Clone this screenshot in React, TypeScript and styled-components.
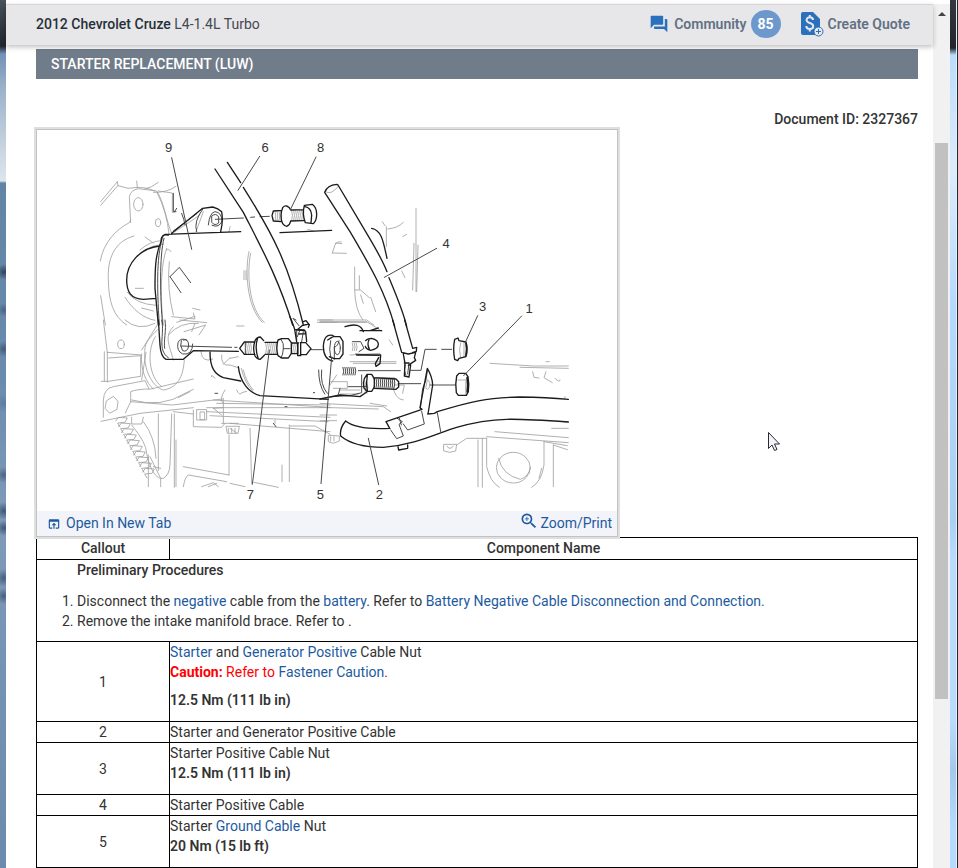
import React from "react";
import styled, { createGlobalStyle, css } from "styled-components";
import { MdForum, MdOpenInBrowser, MdZoomIn } from "react-icons/md";

const GlobalStyle = createGlobalStyle`
  * { box-sizing: border-box; }
  body {
    margin: 0;
    background: #fff;
    color: #333;
    font-family: Roboto, "Liberation Sans", sans-serif;
    font-size: 14px;
    line-height: 20px;
  }
`;

const Window = styled.div`
  display: grid;
  grid-template-columns: 6px minmax(0, 1fr) 17px 8px;
  min-height: 100vh;
`;

const LeftFrame = styled.div`
  background:
    radial-gradient(circle at 4px 272px, #2f4358 0, transparent 8px),
    radial-gradient(circle at 4px 310px, #4b657f 0, transparent 7px),
    radial-gradient(circle at 4px 349px, #435c76 0, transparent 8px),
    radial-gradient(circle at 4px 403px, #5c7ca3 0, transparent 9px),
    radial-gradient(circle at 4px 475px, #4b657f 0, transparent 8px),
    radial-gradient(circle at 4px 511px, #3d5873 0, transparent 9px),
    radial-gradient(circle at 4px 528px, #3d5873 0, transparent 8px),
    radial-gradient(circle at 4px 578px, #45607c 0, transparent 9px),
    radial-gradient(circle at 4px 596px, #45607c 0, transparent 8px),
    linear-gradient(#4a525b 0, #1f262c 46px, #7292b8 54px, #9db3cb 90px,
      #c9d5e1 150px, #dde5ec 181px, #6484a6 183px, #6b8bae 380px, #7f9bba 520px, #7391b2 700px, #6c8aad 100%);
`;

const RightFrame = styled.div`
  border-right: 1px solid #22272c;
  box-shadow: inset -1px 0 #e4f1fc;
  background: linear-gradient(#33383d 0, #20262b 48px, #b9dcfb 55px, #cfe5fb 120px,
    #dcecfb 170px, #b6dafd 300px, #a9cff3 520px, #b9dcfe 560px, #b9dcfe 720px, #a4c8eb 770px, #b6dafd 830px, #b6dafd 100%);
`;

const Viewport = styled.div`
  padding-top: 4px;
  background: #fff;
`;

const Header = styled.header`
  position: relative;
  display: flex;
  align-items: center;
  justify-content: space-between;
  height: 41px;
  padding: 0 23px 2px 30px;
  border-top: 1px solid #d5d5da;
  background: #e7e7e9;
  box-shadow: 0 2px 5px rgba(0, 0, 0, 0.25);
`;

const Vehicle = styled.h1`
  margin: 0;
  color: #46484f;
  font-size: 14px;
  font-weight: 400;

  strong {
    color: #263038;
    font-weight: 500;
  }
`;

const Actions = styled.nav`
  display: flex;
  align-items: center;
  gap: 20px;
`;

const ActionLink = styled.a<{ $gap: number }>`
  display: flex;
  align-items: center;
  gap: ${({ $gap }) => $gap}px;
  color: #627184;
  font-weight: 600;
  text-decoration: none;

  svg { color: #2a70bd; }
`;

const Badge = styled.span`
  width: 30px;
  margin-left: -1px;
  border-radius: 50%;
  background: #6c98cd;
  color: #fff;
  font-weight: 700;
  line-height: 28px;
  text-align: center;
`;

const Article = styled.main`
  padding: 4px 15px 0 30px;
`;

const SectionTitle = styled.h2`
  margin: 0;
  padding: 0 15px;
  background: #717c8a;
  color: #fff;
  font-size: 14px;
  font-weight: 500;
  line-height: 30px;
`;

const DocumentId = styled.p`
  margin: 30px 0 0;
  font-weight: 500;
  text-align: right;
`;

const Figure = styled.figure`
  position: relative;
  width: 582px;
  max-width: 100%;
  margin: 0;
  border: 1px solid #c2c2c2;
  background: #fff;
  box-shadow: 0 0 0 2px #dfdfdf;
`;

const Diagram = styled.svg`
  display: block;
  width: 100%;
  height: auto;
  fill: none;
  stroke-linecap: round;
  stroke-linejoin: round;

  text {
    fill: #333;
    font: 39px "Liberation Sans", sans-serif;
    text-anchor: middle;
  }
`;

const tones = {
  heavy: css`stroke: #1c1c1c; stroke-width: 4;`,
  medium: css`stroke: #4a4a4a; stroke-width: 3;`,
  light: css`stroke: #a0a0a0; stroke-width: 2.5;`,
};

const Ink = styled.g<{ $tone: keyof typeof tones }>`
  ${({ $tone }) => tones[$tone]}
`;

const FigureLinks = styled.figcaption`
  display: flex;
  justify-content: space-between;
  height: 25px;
  padding: 0 5px 0 10px;
  background: #f2f4f9;
`;

const FigureLink = styled.a<{ $gap: number }>`
  display: flex;
  align-items: center;
  gap: ${({ $gap }) => $gap}px;
  color: #1e5aa0;
  line-height: 25px;
  text-decoration: none;
`;

const ZoomGlyph = styled(MdZoomIn)`
  align-self: flex-start;
`;

const Table = styled.table`
  width: 100%;
  border-collapse: collapse;

  th, td {
    padding: 0;
    border: 1px solid #000;
  }
  th {
    padding-bottom: 1px;
    font-weight: 500;
  }
  td a {
    color: #1e5aa0;
    text-decoration: none;
  }
`;

const CalloutHead = styled.th`
  width: 133px;
`;

const CalloutCell = styled.td`
  text-align: center;
`;

const Preliminary = styled.h3`
  margin: 0 0 0 40px;
  font-size: 14px;
  font-weight: 500;
`;

const Steps = styled.ol`
  margin: 11px 0 10px;
  padding-left: 40px;
`;

const Caution = styled.div`
  margin-bottom: 8px;
  color: #f00;
  strong { font-weight: 700; }
`;

const Torque = styled.p`
  margin: 0 0 11px;
  font-weight: 600;
`;

const ScrollTrack = styled.div`
  display: grid;
  grid-template-rows: 139fr 556fr 169fr;
  padding: 0 2px;
  border-top: 4px solid #fff;
  background: #f1f1f1;
`;

const ScrollArrow = styled.span`
  justify-self: center;
  width: 0;
  height: 0;
  margin-top: 8px;
  border: 4px solid transparent;
  border-top: 0;
  border-bottom-color: #444;
`;

const ScrollThumb = styled.div`
  background: #c1c1c1;
`;

const Pointer = styled.svg`
  position: absolute;
  top: 431px;
  left: 767px;
  width: 14px;
  height: 21px;
`;

function QuoteIcon() {
  return (
    <svg width="23" height="25" viewBox="0 0 23 25" aria-hidden="true">
      <path fill="currentColor" d="M2 0h10l7 7v14a2 2 0 0 1-2 2H2a2 2 0 0 1-2-2V2a2 2 0 0 1 2-2z" />
      <path fill="none" stroke="#e7e7e9" strokeWidth="2" d="M12 8c0-1.700-1.300-2.700-3.200-2.700S5.600 6.200 5.600 8c0 4 6.600 2 6.600 6.200 0 1.800-1.500 2.800-3.400 2.800s-3.500-1-3.500-2.900M8.800 3v2.500M8.800 17v2.500" />
      <circle cx="17.500" cy="19.500" r="4.500" fill="#e7e7e9" stroke="currentColor" />
      <path stroke="currentColor" d="M15 19.500h5M17.500 17v5" />
    </svg>
  );
}

const teeth = Array.from({ length: 10 }, (_, i) =>
  `M${257 + i * 9} ${303 + i * 17}l8-11 27 2-7 13-22 2 7 12`
).join("");

const threads = (x: number, y: number, h: number, n: number) =>
  Array.from({ length: n }, (_, i) => `M${x + i * 6} ${y}q5 ${h / 2} 0 ${h}`).join("");

function StarterDiagram() {
  return (
    <Diagram viewBox="21 15 1740 1143" role="img" aria-label="Starter components with numbered callouts">
      <g>
        <Ink $tone="light">
          <path d="M212 230L262 170M212 241L264 181M262 170l2 12 30 8q50-8 80 8M320 168l2 20M345 192q20-4 40-20M370 202q40 2 68-18" />
          <path d="M302 293L298 215Q302 195 325 191L380 198C402 230 408 285 425 325M381 202q30 60 36 125M385 198l42 6v58M302 285l-4 8C255 315 220 355 211 408M312 333C250 350 232 405 235 465 236 530 250 575 290 600M212 512L226 600" />
          <ellipse cx="325" cy="238" rx="14" ry="20" />
          <ellipse cx="384" cy="293" rx="8" ry="12" />
          <path d="M330 375q30-27 65-28M340 377q28-18 60-19M345 336l25 18M285 517C310 555 340 580 375 586M292 502q25 35 85 39M316 490h24M335 549l35 9" />
          <path d="M410 370C392 420 390 510 400 600M423 380q-8-12-14-5M418 410q-8 80 12 160M425 575l70 7-5-18M440 592l55-18M488 550l22 5M657 380C645 430 648 545 697 592M662 385C650 440 655 550 703 592M642 437v27M648 437v27M862 585h45M862 592h60" />
          <path d="M432 322l78-52M520 260l-22 60M600 305l-3 15M833 313q12 3 20 6" />
          <path d={threads(735, 258, 30, 4) + threads(785, 255, 32, 6)} />
        </Ink>
        <Ink $tone="medium">
          <path d="M400 332C380 380 380 480 388 600M402 340C388 390 390 520 398 600M420 455L448 427 482 473M420 455l33 48M430 205v55h8M440 250l-8 12M455 265q8 20 10 35" />
          <path d="M500 320q-10-30 18-67M535 300q4-38 20-40q20 2 21 28-8 22-30 13M546 272q13-9 20 4v18q-12 10-20-1z" />
          <path d="M556 283L640 279M662 277l12-1M690 275l28-1M430 318l70-52" />
        </Ink>
        <Ink $tone="heavy">
          <path d="M555 132L640 262C695 370 745 460 788 600M592 112L632 173M640 187C730 330 775 415 820 600" />
          <path d="M405 328L632 320M750 323L905 316M425 325L518 250 548 246Q565 250 575 260 580 290 572 320" />
          <path d="M415 330q-22-5-22 20C375 390 375 440 375 490L385 600M388 363C330 370 290 415 290 465C290 500 302 521 340 523L378 520" />
          <path d="M755 256l-25 2-4 14 4 16 24 2M758 248q5-6 12-5 9 3 12 12M758 248q-10 24 0 48 6 8 12 8 10-4 12-16M782 255l38-1M782 288l38-1M823 241l24-3q13 10 13 30t-10 28l-24-3q-10-25-3-52zM825 245q18 3 20 25l-2 24" />
        </Ink>
      </g>

      <g transform="translate(870 0)">
        <Ink $tone="light">
          <path d="M288 250v250M278 495l4-140M294 360l-4 140M199 305v60M187 290l8 12M203 312q30-2 47-20M248 335l12-7M245 438l10 20M37 384l10-30 18 2M37 384l42 1M47 355q12-8 17-4" />
          <path d="M104 426v70q2 60 24 88M118 452v40l30 26M104 495h15M122 510l8 25M152 517l15 43M0 585h140l22 15M0 592h140M17 200q15 12 38-16" />
        </Ink>
        <Ink $tone="heavy">
          <path d="M14 202L90 320C155 430 195 500 224 604M54 180L140 325C170 375 185 400 201 440M207 458C235 525 250 560 260 604M14 202Q22 180 50 178L54 180M155 310C185 315 190 350 201 400" />
        </Ink>
      </g>

      <g transform="translate(0 585)">
        <Ink $tone="light">
          <path d="M220 0L232 98M285 0q40 35 90 10M223 95v88M232 98v88M232 97l102 8M236 114l96-7v62L235 184M214 184h20M348 97L335 180M335 102C330 150 350 190 370 207M382 30C340 70 345 80 344 110C346 170 380 208 402 210C450 200 460 160 463 120M376 50C350 90 355 170 395 200M385 10L335 90" />
          <path d="M220 292V240Q222 205 250 200L345 182l12 25M213 304L330 280 490 263M286 279l16-34 125 10 150-18M305 240q90 25 160-20l25-12M302 245v-30q20-8 60-8l85-20 43-10M480 215l-35 18" />
          <path d="M430 120C420 80 400 50 430 20M415 45q35-40 90-35M450 0l80 8M462 35l65-20-20 30M495 10l-10 25M513 95q3 35 35 22M620 18h22M600 115l25-5" />
          <path d={teeth} />
          <path d="M305 315Q350 370 350 400C360 450 380 480 400 475Q418 465 420 435L425 282M305 292v20h30l5-20M340 305Q375 350 378 415M385 282v170M433 282v220M438 360v140M355 405v95M360 410l32 65v25M370 440l22 5" />
          <path d="M430 275L490 282M540 287L895 305M530 263h370M530 275L900 292M550 240L900 262M560 250l340 5M490 270v50l85 2 10-12M500 270v30h30v-30zM510 277v22h14v-22zM585 210q-20 30-5 40M580 235v75M575 310h50M550 265l25 20M550 265l30-2M600 310L900 335M597 345v120M460 440L597 465M460 500q5-30 15-35L590 485M515 500l35-12 15 12M535 500l25-10M600 490l45 10M660 325l5 165M778 315v170M756 435v50M672 487l73 15M735 310v-10M780 318h75l45 25M588 320l4 20h32l4-20zM595 325v12M605 325v12M615 325v12M600 325l20 14" />
          <path d="M575 105q-3 35 25 30l25 8M545 170q-5-10 10 4M600 113l-20 20M620 210q10 20 15 8l15-4" />
          <ellipse cx="273" cy="73" rx="10" ry="13" />
          <path d="M230 242l20-13 14 15-3 24-22 12-13-14z" />
          <path d={threads(650, 70, 30, 3) + threads(707, 68, 34, 6) + threads(788, 70, 30, 3)} />
          <path d="M634 145q10 45 34 68M640 150q8 36 30 60" />
        </Ink>
        <Ink $tone="medium">
          <path d="M395 0C405 45 380 90 415 113M405 0C410 30 400 65 404 85M452 78L605 82M614 82h7M842 89h35M470 60q-20-8-26 8-5 25 14 34 30 4 30-30 M460 60q16-6 16 18-4 20-18 14-10-15-4-30" />
          <path d="M866 150q0 45 18 72M875 150q-5 45 17 70M555 220h8M850 218h4M765 260h6M730 310l8 10" />
          <path d="M798 0l-9-5 18 22M800 28v35M810 30l-8 20M820 35l-5 30" />
          <path d="M646 67v36M753 58q10 12 7 28-1 18-7 28M760 86h20M804 68v34" />
        </Ink>
        <Ink $tone="heavy">
          <path d="M385 0L390 75Q392 110 408 118H460L490 92 625 94M540 96C540 145 555 163 580 173L632 183M625 140C630 185 655 218 690 227L895 238" />
          <g transform="translate(615 -30)">
            <path d="M60 96H28L14 115 28 133H60M60 92Q66 81 76 81L86 92M60 92Q52 116 60 138 66 148 76 148L88 136M68 84Q58 114 70 147M90 97H127M90 133H127M129 90L140 86H160L169 98V130L160 144H140L129 137Q122 114 129 90zM169 99H190M169 131H188M196 98H212L228 116 214 134H196M188 99v38h9V98" />
          </g>
          <path d="M780-10q10 24 14 38l6 38M820 5l8-3 8 10-20 5-15 13 24 2 2 9-20 1M827 35l3 30M795 28l28 2M838 14l-3 8" />
        </Ink>
      </g>

      <g transform="translate(870 585)">
        <Ink $tone="light">
          <path d="M0 5h140l45 28M90 125h138M100 130h128M510 130l130 8h105M600 142l145 3M638 155l4 17 15 2M678 155l-6 18 25 15M678 125h10M705 175q15 15 15 5" />
          <path d="M0 250L190 260l22 15M0 262l175 5M0 285h50M0 302h50M150 250l50 8M525 335l220 18M500 350l245 18M695 325h50M730 305h15" />
          <path d="M474 360v140M487 355v147M500 355v85Q510 485 538 502M500 355H440L410 375M672 365v70Q665 485 635 502M700 375v125M665 445l-8 30M672 365l70 12M700 375l42 14" />
          <ellipse cx="580" cy="443" rx="51" ry="46" />
          <path d="M536 415q10 50 65 63 25-8 30-35" />
          <path d="M372 373h38l-3 20-18 4-17-4zM380 378q10 15 20 0M25 347v18l15 5 18-7v-14zM32 350v13M42 350v13M735 230l-1 6M215 185q8 55 35 55M225 195h28l-5 25" />
          <path d="M90 105l90-5M32 185h50v20H40M60 210h60M60 222h55M218 75l-10-15M50 165l-20 30" />
          <path d="M422 68q-7 22 0 46M432 66v46M414 180h22l10-10M438 181q-3 25 0 44" />
          <path d={threads(135, 185, 35, 2) + threads(97, 70, 22, 3)} />
          <path d="M323 180q10 5 5 22-7 12-10 2z" />
        </Ink>
        <Ink $tone="medium">
          <path d="M115 152h126M272 151h31l12-63h34M365 88h30M234 191h68M330 195h75M352 278l10 57" />
          <path d={threads(69, 142, 23, 7) + threads(162, 173, 32, 11)} />
          <path d="M97 65h25l10 20-15 10M107 102l70 5M85 200h55M35 230l55-3 35-9V165M60 205l-5 18M322 155q-2 28-14 50l-7 62" />
          <path d="M232 295l15 10-10 8 13 35-20 8-18-26M250 312l13 18 50-18-8-38M238 295l6 20M255 135q-5 15 2 30M267 130l-4 32M32 62q-6 26 0 50M43 82q12-4 14-20M43 82v36" />
          <ellipse cx="52" cy="84" rx="9" ry="20" />
        </Ink>
        <Ink $tone="heavy">
          <path d="M38 46q-26-6-28 34 1 38 28 43M23 60L39 50H60L69 64V102L59 116H42L28 110M36 46l8 4" />
          <path d="M75 20q45-15 55 15M120 32h65M150 32l25-8M137 62q5-7 18-7 20 5 20 18 0 14-23 18-14-4-16-12M148 57q-8 15 0 30M110 105h72l-2 26-12 8-2-8 10-18" />
          <path d="M133 176l8-13h14l8 13v25l-8 13h-14l-9-10q-4-15 1-28zM142 166q-5 24 0 46M160 173l68 4 8 8v16l-8 7-66-3M0 237L60 225l60 5 20-14" />
          <path d="M218 0L245 97M254 0L278 85M278 85l12-3M245 97l20 5 22-5-4 16 4 8-15 10-7 6M250 102l5 28-2 38 14 3 5-36M253 129h14M290 82l-1 12-12 4" />
          <g transform="translate(195 -30)">
            <path d="M209 88L219 84 222 92 243 96Q250 118 243 140L222 145 218 152 209 148Q203 117 209 88M242 98Q247 118 242 138" />
            <path d="M215 198L222 190H242L249 200Q253 222 250 245L244 256H220L214 248Q210 222 215 198zM246 202q3 22 0 44" />
          </g>
          <path d="M300 263L322 145q15 25 16 50L324 282M300 263L306 268 198 305l10 18M323 282l20-2L352 275C450 245 500 233 600 231Q680 232 745 238M77 303Q110 330 210 325M77 303Q58 325 62 348C100 380 160 382 190 382C285 375 350 340 410 322C520 290 590 295 745 306M234 380l2 10 27-5v-10" />
        </Ink>
      </g>

      <Ink $tone="medium">
        <path d="M425 98L485 373M689 94L624 196M858 96L781 254M1220 370L1063 457M1343 572L1306 652M1475 573L1301 752M1046 1079L1015 940M667 1078L718 675M873 1076L905 696" />
        <g stroke="none">
          <text x="416" y="81">9</text>
          <text x="705" y="81">6</text>
          <text x="872" y="81">8</text>
          <text x="1248" y="369">4</text>
          <text x="1358" y="558">3</text>
          <text x="1497" y="564">1</text>
          <text x="661" y="1122">7</text>
          <text x="871" y="1122">5</text>
          <text x="1048" y="1122">2</text>
        </g>
      </Ink>
    </Diagram>
  );
}

export default function App() {
  return (
    <>
      <GlobalStyle />
      <Window>
        <LeftFrame />
        <Viewport>
          <Header>
            <Vehicle><strong>2012 Chevrolet Cruze</strong> L4-1.4L Turbo</Vehicle>
            <Actions>
              <ActionLink href="#community" $gap={5}>
                <MdForum size={20} aria-hidden="true" />
                Community
                <Badge>85</Badge>
              </ActionLink>
              <ActionLink href="#quote" $gap={4}>
                <QuoteIcon />
                Create Quote
              </ActionLink>
            </Actions>
          </Header>
          <Article>
            <SectionTitle>STARTER REPLACEMENT (LUW)</SectionTitle>
            <DocumentId>Document ID: 2327367</DocumentId>
            <Figure>
              <StarterDiagram />
              <FigureLinks>
                <FigureLink href="#diagram" $gap={5}>
                  <MdOpenInBrowser size={14} aria-hidden="true" />
                  Open In New Tab
                </FigureLink>
                <FigureLink href="#zoom" $gap={1}>
                  <ZoomGlyph size={20} aria-hidden="true" />
                  Zoom/Print
                </FigureLink>
              </FigureLinks>
            </Figure>
            <Table>
              <thead>
                <tr>
                  <CalloutHead scope="col">Callout</CalloutHead>
                  <th scope="col">Component Name</th>
                </tr>
              </thead>
              <tbody>
                <tr>
                  <td colSpan={2}>
                    <Preliminary>Preliminary Procedures</Preliminary>
                    <Steps>
                      <li>
                        Disconnect the <a href="#negative">negative</a> cable from the <a href="#battery">battery</a>. Refer to{" "}
                        <a href="#disconnection">Battery Negative Cable Disconnection and Connection.</a>
                      </li>
                      <li>Remove the intake manifold brace. Refer to .</li>
                    </Steps>
                  </td>
                </tr>
                <tr>
                  <CalloutCell>1</CalloutCell>
                  <td>
                    <a href="#starter">Starter</a> and <a href="#generator">Generator</a> <a href="#positive">Positive</a> Cable Nut
                    <Caution>
                      <strong>Caution:</strong> Refer to <a href="#fastener">Fastener Caution</a>.
                    </Caution>
                    <Torque>12.5 Nm (111 lb in)</Torque>
                  </td>
                </tr>
                <tr>
                  <CalloutCell>2</CalloutCell>
                  <td>Starter and Generator Positive Cable</td>
                </tr>
                <tr>
                  <CalloutCell>3</CalloutCell>
                  <td>
                    Starter Positive Cable Nut
                    <Torque>12.5 Nm (111 lb in)</Torque>
                  </td>
                </tr>
                <tr>
                  <CalloutCell>4</CalloutCell>
                  <td>Starter Positive Cable</td>
                </tr>
                <tr>
                  <CalloutCell>5</CalloutCell>
                  <td>
                    Starter <a href="#ground">Ground Cable</a> Nut
                    <Torque>20 Nm (15 lb ft)</Torque>
                  </td>
                </tr>
              </tbody>
            </Table>
          </Article>
        </Viewport>
        <ScrollTrack>
          <ScrollArrow />
          <ScrollThumb />
        </ScrollTrack>
        <RightFrame />
      </Window>
      <Pointer viewBox="0 0 14 21" aria-hidden="true">
        <path d="M1.500 1.500v16l3.500-3.500 2.500 5.500 2.500-1-2.500-5.500h5z" fill="#f4f4f4" stroke="#282838" />
      </Pointer>
    </>
  );
}
